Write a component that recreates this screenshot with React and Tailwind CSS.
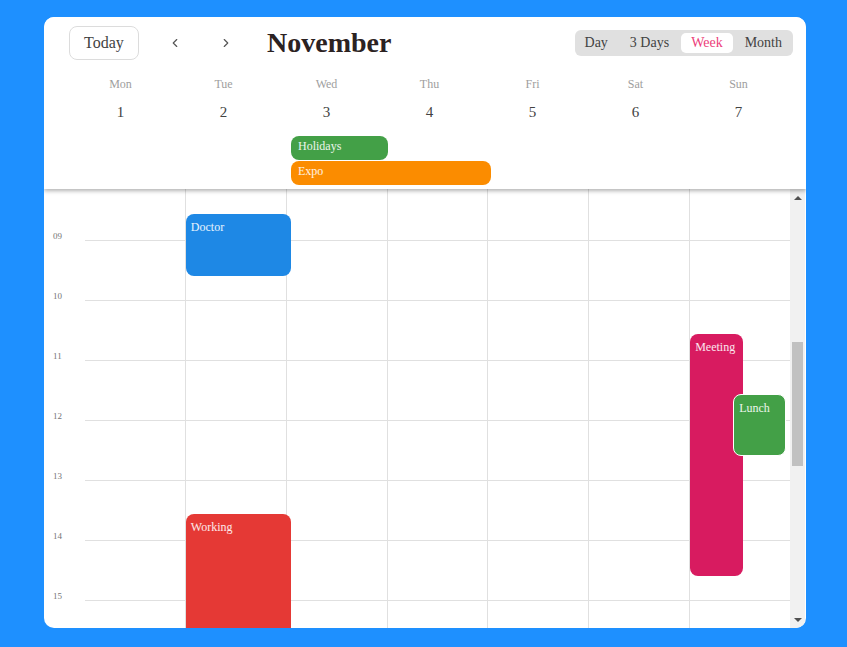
import { ChevronLeft, ChevronRight } from 'lucide-react';

const days = [
  { name: 'Mon', date: 1 },
  { name: 'Tue', date: 2 },
  { name: 'Wed', date: 3 },
  { name: 'Thu', date: 4 },
  { name: 'Fri', date: 5 },
  { name: 'Sat', date: 6 },
  { name: 'Sun', date: 7 },
];

const hours = ['09', '10', '11', '12', '13', '14', '15'];

// events per day column, px from the 08:00 line
const events = {
  1: [
    { title: 'Doctor', top: 33, height: 62, left: 0, width: 105, color: 'bg-[#1e88e5]' },
    { title: 'Working', top: 333, height: 130, left: 0, width: 105, color: 'bg-[#e53935]' },
  ],
  6: [
    { title: 'Meeting', top: 153, height: 242, left: 0, width: 53, color: 'bg-[#d81b60]' },
    { title: 'Lunch', top: 213, height: 62, left: 43, width: 53, color: 'bg-[#43a047]', border: true },
  ],
};

function ViewSwitch() {
  const views = ['Day', '3 Days', 'Week', 'Month'];
  return (
    <div className="flex items-center gap-[2px] rounded-[6px] bg-[#e0e0e0] py-[3px] pr-px">
      {views.map((v) => (
        <button
          key={v}
          className={`h-[20px] rounded-[5px] px-[10px] text-[14px] leading-[20px] ${
            v === 'Week' ? 'bg-white text-[#ec407a]' : 'text-[#424242]'
          }`}
        >
          {v}
        </button>
      ))}
    </div>
  );
}

function Scrollbar() {
  return (
    <div className="flex w-[15px] shrink-0 flex-col items-center bg-[#f1f1f1]">
      <div className="flex h-[17px] items-center justify-center">
        <div className="h-0 w-0 border-x-[4px] border-b-[4px] border-x-transparent border-b-[#505050]" />
      </div>
      <div className="mt-[136px] h-[124px] w-[11px] bg-[#c1c1c1]" />
      <div className="flex-1" />
      <div className="flex h-[17px] items-center justify-center">
        <div className="h-0 w-0 border-x-[4px] border-t-[4px] border-x-transparent border-t-[#505050]" />
      </div>
    </div>
  );
}

export default function App() {
  return (
    <div className="h-[647px] w-full bg-[#1e90ff] pl-[44px] pt-[17px] font-['Liberation_Serif',serif]">
      <div className="flex h-[611px] w-[762px] flex-col overflow-hidden rounded-[10px] bg-white">
        {/* Header */}
        <div className="relative z-20 shrink-0 bg-white pb-[4px] shadow-[0_2px_4px_rgba(0,0,0,0.3)]">
          <div className="flex items-center pl-[25px] pr-[13px] pt-[9px]">
            <button className="h-[34px] w-[70px] rounded-[8px] border border-[#dcdcdc] text-[16px] text-[#424242]">
              Today
            </button>
            <button className="ml-[28px] flex h-[20px] w-[16px] items-center justify-center text-[#555]">
              <ChevronLeft size={14} strokeWidth={2} />
            </button>
            <button className="ml-[35px] flex h-[20px] w-[16px] items-center justify-center text-[#555]">
              <ChevronRight size={14} strokeWidth={2} />
            </button>
            <h1 className="ml-[33px] text-[28px] font-bold leading-[34px] text-[#2b2222]">November</h1>
            <div className="ml-auto">
              <ViewSwitch />
            </div>
          </div>

          <div className="mt-[16px] grid grid-cols-7 pl-[25px] pr-[16px]">
            {days.map((d) => (
              <div key={d.name} className="flex flex-col items-center">
                <span className="text-[12px] leading-[16px] text-[#9e9e9e]">{d.name}</span>
                <span className="mt-[10px] text-[15px] leading-[20px] text-[#424242]">{d.date}</span>
              </div>
            ))}
          </div>

          {/* All-day events */}
          <div className="mt-[14px] flex flex-col gap-px pl-[247px]">
            <div className="h-[24px] w-[97px] rounded-[8px] bg-[#43a047] px-[7px] text-[12px] leading-[20px] text-white/90">
              Holidays
            </div>
            <div className="h-[24px] w-[200px] rounded-[8px] bg-[#fb8c00] px-[7px] text-[12px] leading-[20px] text-white/90">
              Expo
            </div>
          </div>
        </div>

        {/* Body */}
        <div className="flex min-h-0 flex-1">
          <div className="relative min-w-0 flex-1 overflow-hidden">
            <div className="-mt-[8px] flex">
              <div className="w-[41px] shrink-0">
                {hours.map((h) => (
                  <div key={h} className="flex h-[60px] items-end pl-[9px]">
                    <span className="text-[9px] leading-[10px] text-[#757575]">{h}</span>
                  </div>
                ))}
              </div>
              {days.map((d, i) => (
                <div key={d.name} className={`relative flex-1 ${i > 0 ? 'border-l border-[#e0e0e0]' : ''}`}>
                  {[...hours, '16'].map((h) => (
                    <div key={h} className="h-[60px] border-b border-[#e0e0e0]" />
                  ))}
                  {(events[i] || []).map((e) => (
                    <div
                      key={e.title}
                      className={`absolute rounded-[8px] px-[5px] pt-[5px] text-[12px] leading-[16px] text-white/90 ${e.color} ${
                        e.border ? 'z-20 border border-white' : 'z-10'
                      }`}
                      style={{ top: e.top, height: e.height, left: e.left, width: e.width }}
                    >
                      {e.title}
                    </div>
                  ))}
                </div>
              ))}
            </div>
          </div>
          <Scrollbar />
          <div className="w-px shrink-0" />
        </div>
      </div>
    </div>
  );
}
